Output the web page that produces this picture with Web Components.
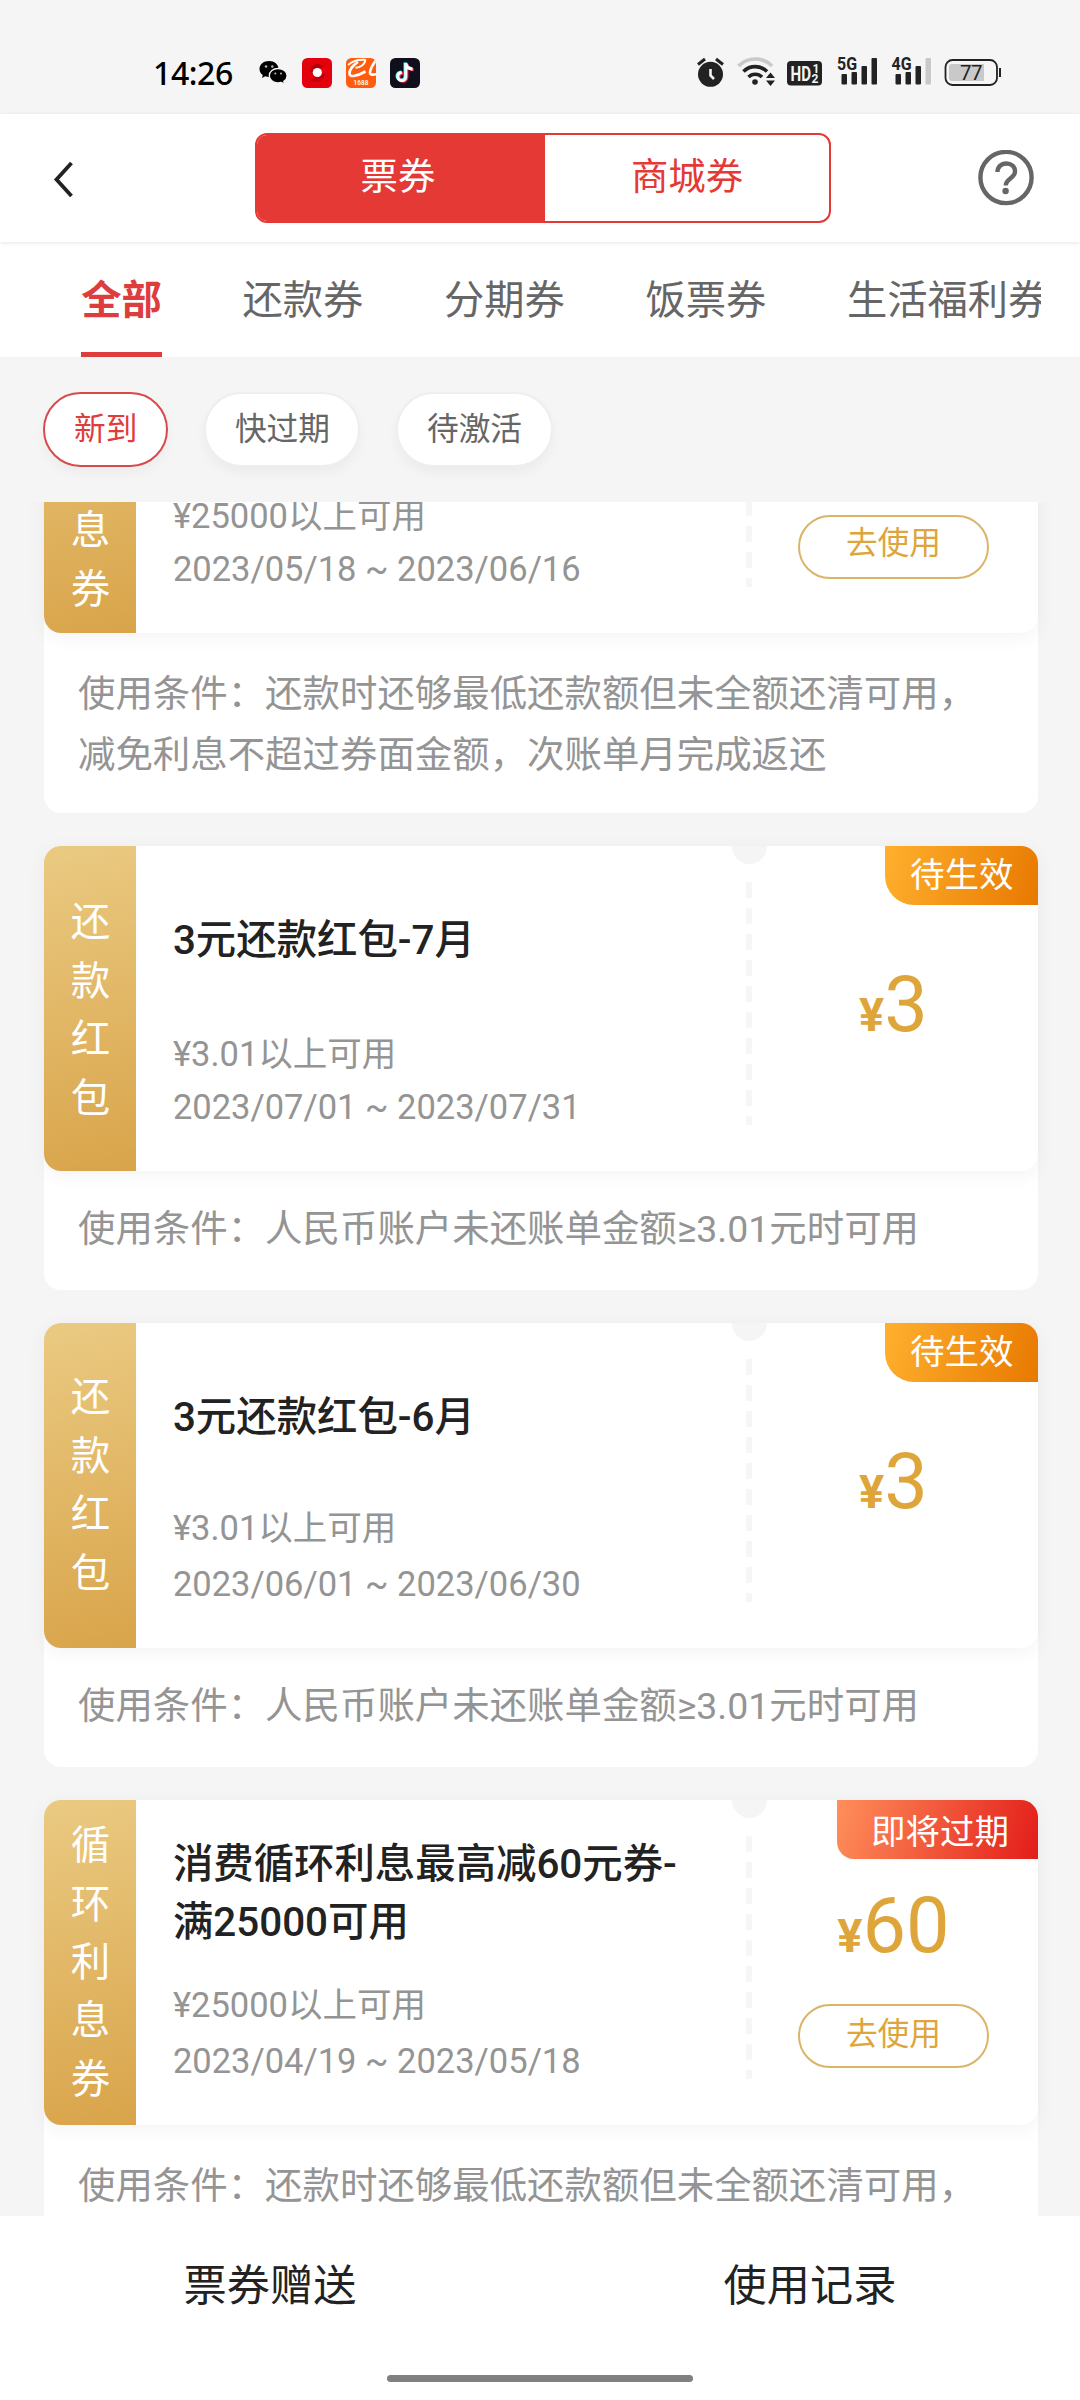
<!DOCTYPE html>
<html lang="zh-CN">
<head>
<meta charset="utf-8">
<title>票券</title>
<style>
  body {
    margin: 0;
    width: 1080px;
    height: 2400px;
    overflow: hidden;
    background: #f5f5f5;
    color: #222;
    font-family: Roboto, "Noto Sans CJK SC", sans-serif;
  }
</style>
</head>
<body>
<coupon-page>
  <status-bar slot="top"></status-bar>
  <nav-header slot="top"></nav-header>
  <category-tabs slot="top" items="全部,还款券,分期券,饭票券,生活福利券"></category-tabs>
  <filter-chip slot="filters" active>新到</filter-chip>
  <filter-chip slot="filters">快过期</filter-chip>
  <filter-chip slot="filters">待激活</filter-chip>

  <coupon-card kind="循环利息券" amount="60" action="去使用" scrolled>
    <span slot="title">消费循环利息最高减60元券-满25000可用</span>
    <span slot="limit">¥25000以上可用</span>
    <span slot="date">2023/05/18 ~ 2023/06/16</span>
    <span slot="condition">使用条件：还款时还够最低还款额但未全额还清可用，减免利息不超过券面金额，次账单月完成返还</span>
  </coupon-card>
  <coupon-card kind="还款红包" amount="3" badge="待生效" short>
    <span slot="title">3元还款红包-7月</span>
    <span slot="limit">¥3.01以上可用</span>
    <span slot="date">2023/07/01 ~ 2023/07/31</span>
    <span slot="condition">使用条件：人民币账户未还账单金额≥3.01元时可用</span>
  </coupon-card>
  <coupon-card kind="还款红包" amount="3" badge="待生效" short raised>
    <span slot="title">3元还款红包-6月</span>
    <span slot="limit">¥3.01以上可用</span>
    <span slot="date">2023/06/01 ~ 2023/06/30</span>
    <span slot="condition">使用条件：人民币账户未还账单金额≥3.01元时可用</span>
  </coupon-card>
  <coupon-card kind="循环利息券" amount="60" badge="即将过期" urgent action="去使用" raised>
    <span slot="title">消费循环利息最高减60元券-满25000可用</span>
    <span slot="limit">¥25000以上可用</span>
    <span slot="date">2023/04/19 ~ 2023/05/18</span>
    <span slot="condition">使用条件：还款时还够最低还款额但未全额还清可用，减免利息不超过券面金额，次账单月完成返还</span>
  </coupon-card>

  <bottom-bar slot="bottom"></bottom-bar>
</coupon-page>

<script>
class CouponPage extends HTMLElement {
  constructor() {
    super();
    this.attachShadow({ mode: 'open' }).innerHTML = `
      <style>
        :host {
          display: flex;
          flex-direction: column;
          height: 2400px;
        }

        .filters {
          flex: none;
          display: flex;
          gap: 36px;
          height: 110px;
          padding: 35px 43px 0;
        }

        .list {
          flex: 1;
          min-height: 0;
          overflow: hidden;
          padding: 0 42px 0 43.5px;
        }

        /* the list is scrolled part-way through its first card */
        .scroller {
          display: flex;
          flex-direction: column;
          gap: 33px;
          margin-top: -194px;
        }
      </style>
      <slot name="top"></slot>
      <div class="filters"><slot name="filters"></slot></div>
      <div class="list"><div class="scroller"><slot></slot></div></div>
      <slot name="bottom"></slot>
    `;
  }
}

class StatusBar extends HTMLElement {
  constructor() {
    super();
    this.attachShadow({ mode: 'open' }).innerHTML = `
      <style>
        :host {
          flex: none;
          display: flex;
          align-items: center;
          box-sizing: border-box;
          height: 114px;
          padding: 32px 78px 0 153px;
          color: #000;
        }

        .time {
          width: 106px;
          font: 500 32px/32px "Noto Sans", sans-serif;
          letter-spacing: -0.4px;
        }

        .apps {
          flex: 1;
          display: flex;
          align-items: center;
          gap: 14px;
        }

        svg {
          display: block;
        }
      </style>
      <span class="time">14:26</span>
      <div class="apps">
        <svg width="29" height="30" viewBox="0 0 29 30">
          <path d="M10 3C4.500 3 .5 6.500 .5 11c0 2.500 1.300 4.700 3.300 6.100L3 20l3.200-1.700c1.200.4 2.500.6 3.800.6 5.500 0 9.500-3.500 9.500-8S15.500 3 10 3z" fill="#000"/>
          <path d="M19 10.500c-4.900 0-8.700 3.200-8.700 7.200s3.800 7.200 8.700 7.200c1.100 0 2.200-.2 3.200-.5l3.400 1.700-.8-2.700c2-1.300 3.300-3.400 3.300-5.700 0-4-4.200-7.200-9.100-7.200z" fill="#000" stroke="#f5f5f5" stroke-width="1.300"/>
          <circle cx="7" cy="8.500" r="1.200" fill="#bbb"/><circle cx="13.300" cy="8.500" r="1.200" fill="#bbb"/>
          <circle cx="16.300" cy="15.500" r="1" fill="#bbb"/><circle cx="22" cy="15.500" r="1" fill="#bbb"/>
        </svg>
        <svg width="30" height="30" viewBox="0 0 30 30">
          <rect width="30" height="30" rx="5.500" fill="#e5000d"/>
          <path d="M7 12C9 6 16 4 22 8L17 11 10 15z" fill="#b3000b"/>
          <path d="M23 16C22 22 16 26 8 23L13 19 19 15z" fill="#c2000c"/>
          <circle cx="15.300" cy="14.500" r="4.600" fill="#fff"/>
        </svg>
        <svg width="30" height="30" viewBox="0 0 30 30">
          <defs><clipPath id="c"><rect width="30" height="30" rx="5.500"/></clipPath></defs>
          <g clip-path="url(#c)">
            <rect width="30" height="30" fill="#ff5d0d"/>
            <path d="M2 7C7 3 13 1 20 2" fill="none" stroke="#fff" stroke-width="1.800"/>
            <path d="M12 4C7 7 3 12 3.500 16c.5 3.500 8 2 16-2.500" fill="none" stroke="#fff" stroke-width="2.600"/>
            <path d="M9.500 9.800C14 9.500 18 7 19.500 2.500" fill="none" stroke="#fff" stroke-width="2"/>
            <path d="M31 1C27 6 24 11 24 15c0 2 3 2 7 1" fill="none" stroke="#fff" stroke-width="2.600"/>
            <text x="15" y="27" text-anchor="middle" font-family="Roboto" font-size="6.500" font-weight="500" fill="#fff">1688</text>
          </g>
        </svg>
        <svg width="30" height="30" viewBox="0 0 30 30">
          <rect width="30" height="30" rx="5.500" fill="#10101c"/>
          <g fill="none" stroke-width="3">
            <path d="M15.800 5v13.500a4 4 0 1 1-4-4M15.800 5c.4 3.500 3 5.800 6.800 6" stroke="#25f4ee" transform="translate(-.8 -.6)"/>
            <path d="M15.800 5v13.500a4 4 0 1 1-4-4M15.800 5c.4 3.500 3 5.800 6.800 6" stroke="#fe2c55" transform="translate(1.100 .8)"/>
            <path d="M15.800 5v13.500a4 4 0 1 1-4-4M15.800 5c.4 3.500 3 5.800 6.800 6" stroke="#fff"/>
          </g>
        </svg>
      </div>
      <svg width="306" height="36" viewBox="696 55 306 36" fill="#222">
        <!-- alarm -->
        <circle cx="710.500" cy="74.300" r="12.500"/>
        <path d="M698 64.500l7-5.500M716 59l7 5.500" stroke="#222" stroke-width="3"/>
        <path d="M710.500 69v6.500l3.500 3.500" stroke="#f5f5f5" stroke-width="2.600" fill="none"/>
        <!-- wifi -->
        <g fill="none" stroke-width="3.600">
          <path d="M738.500 66a23.500 23.500 0 0 1 33.500 0" stroke="#c9c9c9"/>
          <path d="M743.500 71.500a16.500 16.500 0 0 1 23.500 0" stroke="#222"/>
          <path d="M748.500 77a9.500 9.500 0 0 1 13.500 0" stroke="#222"/>
        </g>
        <circle cx="755" cy="82" r="2.800"/>
        <path d="M766 78h9l-4.500-5.500zM766 80.500h9l-4.500 5.500z"/>
        <!-- hd -->
        <rect x="787" y="61" width="35" height="24.500" rx="4"/>
        <g fill="#f5f5f5" font-family="Roboto" font-weight="700">
          <text x="790.500" y="80.500" font-size="20" textLength="20.500" lengthAdjust="spacingAndGlyphs">HD</text>
          <text x="812.500" y="72.500" font-size="12">1</text>
          <text x="811.500" y="83" font-size="12">2</text>
        </g>
        <!-- signal -->
        <g font-family="Roboto" font-weight="700" font-size="17.500">
          <text x="837" y="70" textLength="20" lengthAdjust="spacingAndGlyphs">5G</text>
          <text x="891.500" y="70" textLength="20" lengthAdjust="spacingAndGlyphs">4G</text>
        </g>
        <rect x="841.500" y="74" width="5.500" height="10.500" rx="1"/>
        <rect x="851.500" y="72" width="5.500" height="12.500" rx="1"/>
        <rect x="861.500" y="66" width="5.500" height="18.500" rx="1"/>
        <rect x="871.500" y="58" width="5.500" height="26.500" rx="1"/>
        <rect x="895.500" y="74" width="5.500" height="10.500" rx="1"/>
        <rect x="905.500" y="72" width="5.500" height="12.500" rx="1"/>
        <rect x="915.500" y="66" width="5.500" height="18.500" rx="1"/>
        <rect x="925.500" y="58" width="5.500" height="26.500" rx="1" fill="#c9c9c9"/>
        <!-- battery -->
        <rect x="945.500" y="60" width="51.500" height="25" rx="7" fill="none" stroke="#222" stroke-width="1.800"/>
        <path d="M952 64h32v17h-32q-3 0-3-3v-11q0-3 3-3z" fill="#c9c9c9"/>
        <rect x="999" y="68" width="2" height="9"/>
        <text x="960" y="79.500" font-family="Roboto" font-size="20.500" textLength="22.500">77</text>
      </svg>
    `;
  }
}

class NavHeader extends HTMLElement {
  constructor() {
    super();
    this.attachShadow({ mode: 'open' }).innerHTML = `
      <style>
        :host {
          flex: none;
          display: flex;
          align-items: center;
          justify-content: space-between;
          box-sizing: border-box;
          height: 128px;
          padding: 1px 46px 2px 52px;
          background: #fff;
          position: relative;
          z-index: 1;
          box-shadow: 0 1px 4px rgba(0, 0, 0, 0.1);
        }

        .segment {
          display: flex;
          box-sizing: border-box;
          width: 576px;
          height: 90px;
          margin-left: 151px;
          margin-right: auto;
          border: 2px solid #e43935;
          border-radius: 12px;
          overflow: hidden;
        }

        .segment span {
          flex: 1;
          text-align: center;
          font-size: 37.4px;
          line-height: 85px;
          color: #e43935;
        }

        .segment .active {
          flex: none;
          box-sizing: border-box;
          width: 288px;
          padding-right: 6px;
          background: #e43935;
          color: #fff;
        }

        svg {
          display: block;
        }
      </style>
      <svg width="52" height="40" viewBox="0 0 52 40">
        <path d="M19.500 5L4.500 21.500l15 16.500" fill="none" stroke="#222" stroke-width="3.800"/>
      </svg>
      <div class="segment">
        <span class="active">票券</span>
        <span>商城券</span>
      </div>
      <svg width="56" height="56" viewBox="0 0 56 56" fill="none" stroke="#666">
        <circle cx="28" cy="27.500" r="25.600" stroke-width="4.400"/>
        <path d="M19.500 22c0-5 3.700-8.500 8.700-8.500 5.200 0 8.800 3.300 8.800 8 0 6.500-9.300 7.500-9.300 14" stroke-width="4.400"/>
        <circle cx="27.600" cy="41" r="3.200" fill="#666" stroke="none"/>
      </svg>
    `;
  }
}

class CategoryTabs extends HTMLElement {
  constructor() {
    super();
    this.attachShadow({ mode: 'open' });
  }

  connectedCallback() {
    const items = this.getAttribute('items').split(',');
    this.shadowRoot.innerHTML = `
      <style>
        :host {
          flex: none;
          display: block;
          height: 115px;
          padding: 0 39px 0 41px;
          background: #fff;
        }

        nav {
          display: flex;
          height: 100%;
          gap: 80.6px;
          padding-left: 40.3px;
          overflow: hidden;
        }

        span {
          flex: none;
          box-sizing: border-box;
          font-size: 40.3px;
          line-height: 117px;
          height: 115px;
          color: #666;
        }

        .active {
          color: #dd3d3d;
          font-weight: 700;
          border-bottom: 5px solid #dd3d3d;
        }
      </style>
      <nav>
        ${items.map((t, i) => `<span class="${i === 0 ? 'active' : ''}">${t}</span>`).join('')}
      </nav>
    `;
  }
}

class FilterChip extends HTMLElement {
  constructor() {
    super();
    this.attachShadow({ mode: 'open' }).innerHTML = `
      <style>
        :host {
          box-sizing: border-box;
          height: 75px;
          padding: 0 28.500px;
          border: 2px solid #eee;
          border-radius: 38px;
          background: #fff;
          box-shadow: 0 6px 12px rgba(0, 0, 0, 0.04);
          color: #666;
          font-size: 31.700px;
          line-height: 71px;
        }

        :host([active]) {
          padding: 0 29px;
          border-color: #d9484b;
          color: #dd3d3d;
        }
      </style>
      <slot></slot>
    `;
  }
}

class CouponCard extends HTMLElement {
  constructor() {
    super();
    this.attachShadow({ mode: 'open' });
  }

  connectedCallback() {
    const kind = this.getAttribute('kind');
    const badge = this.getAttribute('badge');
    const action = this.getAttribute('action');
    this.shadowRoot.innerHTML = `
      <style>
        :host {
          flex: none;
          display: block;
          border-radius: 17px;
          background: #fff;
        }

        .ticket {
          position: relative;
          display: flex;
          height: 324.500px;
          border-radius: 17px;
          background: #fff;
          box-shadow: 0 4px 20px rgba(0, 0, 0, 0.05);
        }

        .kind {
          box-sizing: border-box;
          display: flex;
          flex-direction: column;
          align-items: center;
          justify-content: center;
          width: 92px;
          padding: 6px 0 0 2px;
          border-radius: 17px 0 0 17px;
          background: linear-gradient(165deg, #eaca82, #d9a44a);
          color: #fff;
          font-size: 39.500px;
          line-height: 58.400px;
        }

        :host([raised]) .kind {
          padding-top: 2px;
        }

        .body {
          width: 530px;
          padding: 36px 0 0 37.400px;
        }

        .title {
          box-sizing: border-box;
          height: 147px;
          font-size: 40.400px;
          font-weight: 500;
          line-height: 58.400px;
        }

        :host([short]) .title {
          padding-top: 30px;
        }

        .meta {
          display: flex;
          flex-direction: column;
          gap: 3px;
          color: #949494;
          font-size: 34.500px;
          line-height: 50px;
        }

        :host([raised]) .meta {
          gap: 6px;
          margin-top: -3px;
        }

        .perforation {
          align-self: flex-start;
          width: 5.500px;
          height: 243px;
          margin: 36px 0 0 43.500px;
          background: repeating-linear-gradient(#f6f6f6 0 16px, transparent 16px 26px);
        }

        .notch {
          position: absolute;
          top: 0;
          left: 688.500px;
          width: 35px;
          height: 17.500px;
          border-radius: 0 0 18px 18px;
          background: #f5f5f5;
        }

        .value {
          flex: 1;
          display: flex;
          flex-direction: column;
          align-items: center;
          padding-right: 6px;
          color: #dea53a;
        }

        .price {
          height: 91px;
          margin-top: 113px;
          padding-left: 3px;
          font-size: 77.500px;
          line-height: 91px;
        }

        .price small {
          font-size: 47px;
          font-weight: 700;
        }

        :host([action]) .price {
          margin-top: 80px;
        }

        .action {
          box-sizing: border-box;
          width: 191px;
          height: 64px;
          margin: 36px 0 0 3px;
          border: 2px solid #dab468;
          border-radius: 32px;
          text-align: center;
          font-size: 31.700px;
          line-height: 54px;
        }

        :host([raised]) .action {
          margin-top: 33px;
          line-height: 58px;
        }

        .badge {
          position: absolute;
          top: 0;
          right: 0;
          padding: 0 24.500px 0 25px;
          border-radius: 0 17px 0 29px;
          background: linear-gradient(105deg, #ffb02e, #e87900);
          color: #fff;
          font-size: 34.500px;
          line-height: 59px;
          height: 59px;
        }

        :host([urgent]) .badge {
          padding: 0 29px 0 34.500px;
          border-radius: 0 17px 0 17px;
          background: linear-gradient(105deg, #ff8f5a, #e31d1a);
          line-height: 64px;
        }

        .condition {
          padding: 31px 34.500px 27.500px;
          color: #949494;
          font-size: 37.440px;
          line-height: 61px;
        }

        :host([short]) .condition {
          padding: 28.500px 34.500px 30px;
        }

        /* parts that have scrolled out above the list */
        :host([scrolled]) .title,
        :host([scrolled]) .price,
        :host([scrolled]) .kind span:nth-child(-n + 3) {
          visibility: hidden;
        }
      </style>
      <div class="ticket">
        <div class="kind">${[...kind].map(c => `<span>${c}</span>`).join('')}</div>
        <div class="body">
          <div class="title"><slot name="title"></slot></div>
          <div class="meta"><slot name="limit"></slot><slot name="date"></slot></div>
        </div>
        <div class="perforation"></div>
        <div class="value">
          <div class="price"><small>¥</small>${this.getAttribute('amount')}</div>
          ${action ? `<div class="action">${action}</div>` : ''}
        </div>
        <div class="notch"></div>
        ${badge ? `<div class="badge">${badge}</div>` : ''}
      </div>
      <div class="condition"><slot name="condition"></slot></div>
    `;
  }
}

class BottomBar extends HTMLElement {
  constructor() {
    super();
    this.attachShadow({ mode: 'open' }).innerHTML = `
      <style>
        :host {
          flex: none;
          display: flex;
          flex-direction: column;
          align-items: center;
          height: 184px;
          background: #fff;
        }

        .actions {
          display: flex;
          width: 100%;
          height: 159px;
        }

        .actions span {
          flex: 1;
          text-align: center;
          font-size: 43.200px;
          line-height: 141px;
        }

        .home {
          width: 306px;
          height: 7px;
          border-radius: 4px;
          background: #808080;
        }
      </style>
      <div class="actions"><span>票券赠送</span><span>使用记录</span></div>
      <div class="home"></div>
    `;
  }
}

customElements.define('coupon-page', CouponPage);
customElements.define('status-bar', StatusBar);
customElements.define('nav-header', NavHeader);
customElements.define('category-tabs', CategoryTabs);
customElements.define('filter-chip', FilterChip);
customElements.define('coupon-card', CouponCard);
customElements.define('bottom-bar', BottomBar);
</script>
</body>
</html>
